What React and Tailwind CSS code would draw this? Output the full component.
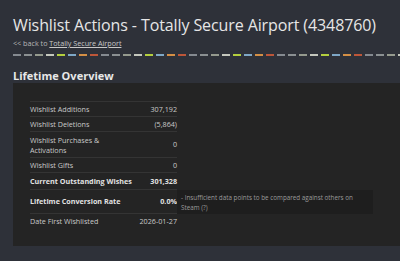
import React from 'react'

const dashColors = ['#858a90', '#8b9092', '#959a8e', '#c4c7bd', '#b4cf3e', '#7ea7c6', '#d48f45', '#bd5639']

const rows = [
  { label: 'Wishlist Additions', value: '307,192', h: 'h-[15px]' },
  { label: 'Wishlist Deletions', value: '(5,864)', h: 'h-[15px]' },
  { label: 'Wishlist Purchases & Activations', value: '0', h: 'h-[26px]' },
  { label: 'Wishlist Gifts', value: '0', h: 'h-[15px]' },
]

const App = () => {
  const dashes = []
  for (let i = 0; i < 36; i++) dashes.push(dashColors[i % 8])

  return (
    <div className="min-h-screen bg-[#2e3139] font-['Open_Sans',sans-serif] text-[#e6e6e6] overflow-hidden pt-[15px]">
      <div className="pl-[13px]">
        <h1 className="text-[16px] leading-[20px] whitespace-nowrap tracking-[-0.1px]">
          Wishlist Actions - Totally Secure Airport (4348760)
        </h1>
        <p className="text-[7.2px] leading-[10px] mt-[3px] text-[#b8b8b8]">
          &lt;&lt; back to <span className="underline text-[#c8c8c8]">Totally Secure Airport</span>
        </p>
        <div className="flex gap-[3px] mt-[6px] whitespace-nowrap">
          {dashes.map((c, i) => (
            <div key={i} className="h-[2px] w-[8px] shrink-0" style={{ backgroundColor: c }} />
          ))}
        </div>
        <h2 className="text-[11px] font-bold leading-[14px] mt-[13px] text-[#e8e8e8]">Lifetime Overview</h2>
      </div>

      <div className="ml-[13px] h-[163px] bg-[#242424] pt-[18px] pl-[17px]">
        <div className="w-[147px] text-[7.2px] text-[#c9c9c9]">
          {rows.map((r) => (
            <div key={r.label} className={`flex items-center justify-between border-t border-[#343434] ${r.h}`}>
              <span className="w-[78px] leading-[10px]">{r.label}</span>
              <span>{r.value}</span>
            </div>
          ))}
          <div className="flex items-center justify-between border-t border-[#343434] h-[17px] font-bold text-[#e2e2e2]">
            <span>Current Outstanding Wishes</span>
            <span>301,328</span>
          </div>
          <div className="relative flex items-center justify-between border-t border-[#343434] h-[24px] font-bold text-[#e2e2e2]">
            <span>Lifetime Conversion Rate</span>
            <span>0.0%</span>
            <div className="absolute left-[147px] top-0 h-[24px] w-[196px] bg-[#1e1e1e] pl-[4px] pt-[3px] text-[6.3px] leading-[10px] font-normal text-[#9a9a9a] whitespace-nowrap">
              - Insufficient data points to be compared against others on
              <br />
              Steam (?)
            </div>
          </div>
          <div className="flex items-center justify-between border-t border-[#343434] h-[15px]">
            <span>Date First Wishlisted</span>
            <span>2026-01-27</span>
          </div>
        </div>
      </div>
    </div>
  )
}

export default App
